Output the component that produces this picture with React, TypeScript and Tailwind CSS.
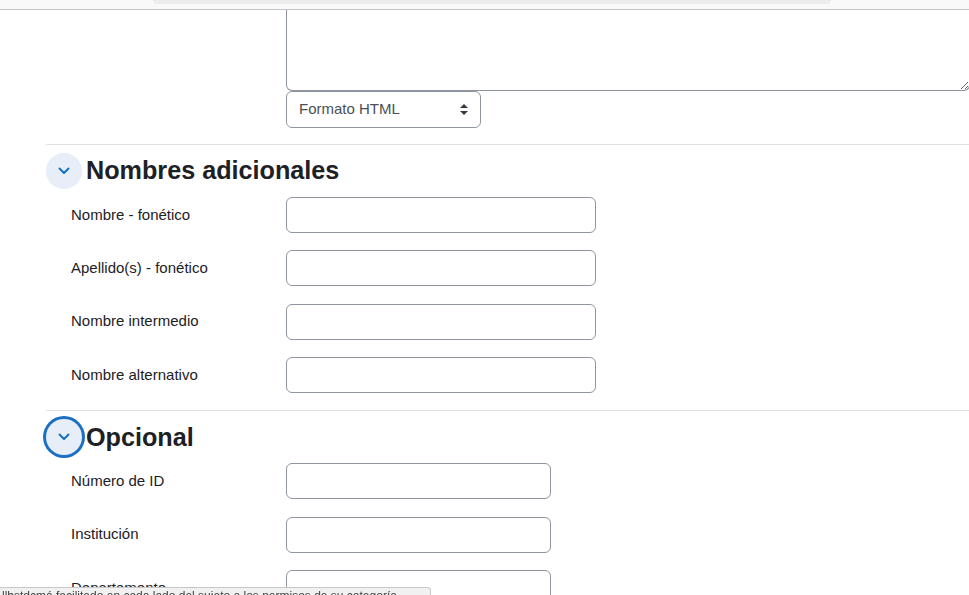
import React from 'react';

const Chevron = () => (
  <svg width="12" height="8" viewBox="0 0 12 8" fill="none">
    <path d="M1.5 1.5 L6 6 L10.5 1.5" stroke="#0f6cbf" strokeWidth="1.8" strokeLinecap="round" strokeLinejoin="round" />
  </svg>
);

const SelectArrows = () => (
  <svg width="8" height="11" viewBox="0 0 8 11">
    <path d="M4 0 L8 4 L0 4 Z" fill="#343a40" />
    <path d="M4 11 L8 7 L0 7 Z" fill="#343a40" />
  </svg>
);

interface SectionProps {
  title: string;
  focused?: boolean;
  fields: string[];
  inputWidth: string;
}

const Section: React.FC<SectionProps> = ({ title, focused, fields, inputWidth }) => (
  <div className="border-t border-[#dee2e6]">
    <div className="flex items-center mt-[8px] mb-[8px] h-[36px]">
      <div
        className={
          focused
            ? 'w-[36px] h-[36px] rounded-full bg-[#e7eef8] flex items-center justify-center shadow-[0_0_0_3px_#1c6fc2]'
            : 'w-[36px] h-[36px] rounded-full bg-[#e7eef8] flex items-center justify-center'
        }
      >
        <Chevron />
      </div>
      <h3 className="ml-[4px] text-[25.2px] font-bold leading-none text-[#1d2125]">{title}</h3>
    </div>
    {fields.map((f) => (
      <div key={f} className="flex items-center h-[36px] mb-[17.33px]">
        <label className="w-[240px] pl-[25px] text-[15px] text-[#1d2125]">{f}</label>
        <input className={`${inputWidth} h-[36px] border border-[#8f959e] rounded-[6px] bg-white`} />
      </div>
    ))}
  </div>
);

export default function App() {
  return (
    <div className="h-[595px] overflow-hidden bg-white font-['Liberation_Sans',Arial,sans-serif] text-[#1d2125]">
      {/* top edge of fixed bar */}
      <div className="h-[10px] bg-[#f9f9f9] border-b border-[#c6c6c6]">
        <div className="ml-[153px] w-[678px] h-[4px] bg-[#ececec] rounded-b-[4px]" />
      </div>

      <div className="pl-[46px]">
        <div className="pl-[240px]">
          <textarea className="block w-[684px] h-[81px] border border-t-0 border-[#8f959e] rounded-b-[6px] bg-white resize" />
          <div className="flex items-center justify-between w-[195px] h-[37px] px-[12px] pr-[12px] border border-[#8f959e] rounded-[6px] text-[15px] text-[#495057]">
            <span>Formato HTML</span>
            <SelectArrows />
          </div>
        </div>

        <div className="mt-[16px]">
          <Section
            title="Nombres adicionales"
            fields={['Nombre - fonético', 'Apellido(s) - fonético', 'Nombre intermedio', 'Nombre alternativo']}
            inputWidth="w-[310px]"
          />
          <Section
            title="Opcional"
            focused
            fields={['Número de ID', 'Institución', 'Departamento']}
            inputWidth="w-[265px]"
          />
        </div>
      </div>

      {/* browser status bubble */}
      <div className="fixed bottom-0 left-0 w-[431px] h-[8px] overflow-hidden bg-[#f1f1f1] border-t border-r border-[#c8c8c8] rounded-tr-[4px]">
        <div className="pl-[2px] pt-[2px] text-[12px] leading-none text-[#444] whitespace-nowrap">
          llbstdcmá facilitado en cada lado del sujeto a los permisos de su categoría
        </div>
      </div>
    </div>
  );
}
